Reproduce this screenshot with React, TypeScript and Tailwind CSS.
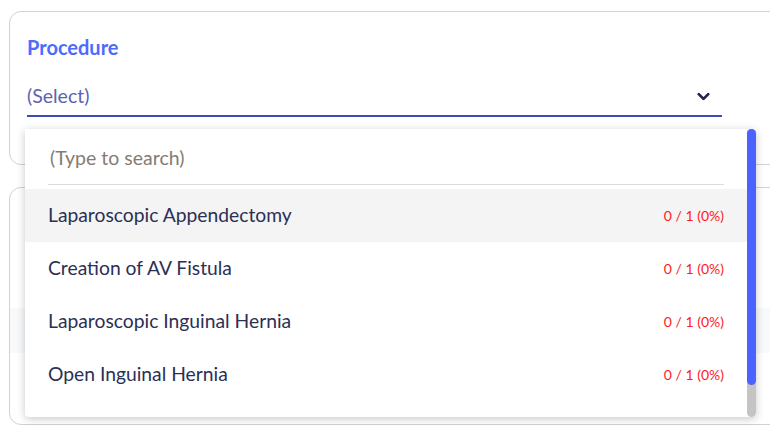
import { ChevronDown } from 'lucide-react';

const procedures = [
  { name: 'Laparoscopic Appendectomy', count: '0 / 1 (0%)' },
  { name: 'Creation of AV Fistula', count: '0 / 1 (0%)' },
  { name: 'Laparoscopic Inguinal Hernia', count: '0 / 1 (0%)' },
  { name: 'Open Inguinal Hernia', count: '0 / 1 (0%)' },
];

export default function App() {
  return (
    <div
      className="relative w-[770px] h-[435px] overflow-hidden bg-white pl-[9px] pt-[11px]"
      style={{ fontFamily: 'Lato, "Open Sans", sans-serif' }}
    >
      <div className="w-[800px] h-[154px] rounded-xl border border-[#d2d2d2] px-[17px] pt-[23px]">
        <div className="text-[20px] font-bold leading-6 text-[#4d6bfe]">Procedure</div>
        <div className="mt-[23px] w-[695px] flex items-center justify-between border-b-2 border-[#3d4db7] pb-[5px]">
          <span className="text-[19.5px] leading-7 text-[#5a63b0]">(Select)</span>
          <ChevronDown className="w-[19px] h-[19px] mr-[9px] text-[#23254e]" strokeWidth={3.5} />
        </div>
      </div>

      <div className="mt-[22px] w-[800px] h-[238px] rounded-xl border border-[#d2d2d2] pt-[120px]">
        <div className="h-[45px] bg-[#f8f9fb]" />
      </div>

      <div className="absolute left-[25px] top-[129px] w-[731px] h-[288px] bg-white rounded-b shadow-[0_2px_8px_rgba(0,0,0,0.22)] flex">
        <div className="flex-1 flex flex-col">
          <div className="mx-[23px] h-[56px] flex items-center border-b border-[#dcdcdc] px-[2px] pt-[3px]">
            <span className="text-[19.5px] text-[#857b74]">(Type to search)</span>
          </div>
          <div className="pt-[4px]">
            {procedures.map((p, i) => (
              <div
                key={p.name}
                className={`h-[53px] flex items-center justify-between pl-[23px] pr-[23px] ${i === 0 ? 'bg-[#f4f4f4]' : ''}`}
              >
                <span className="text-[19.3px] text-[#2b2f55]">{p.name}</span>
                <span className="text-[14px] text-[#ff1a1a]">{p.count}</span>
              </div>
            ))}
          </div>
        </div>
        <div className="w-[9px] h-full rounded-full bg-[#c4c4c4] flex flex-col">
          <div className="h-[256px] rounded-full bg-[#4a63ff]" />
        </div>
      </div>
    </div>
  );
}
